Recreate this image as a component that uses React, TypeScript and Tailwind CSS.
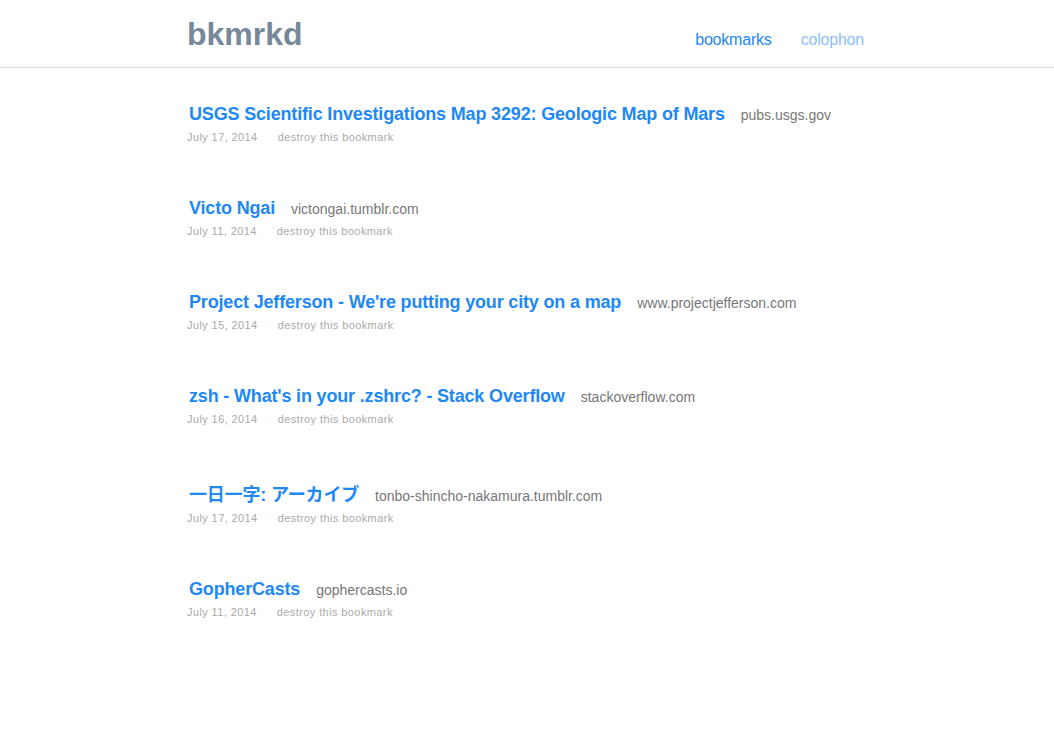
import React from "react";

const bookmarks = [
  {
    title: "USGS Scientific Investigations Map 3292: Geologic Map of Mars",
    site: "pubs.usgs.gov",
    date: "July 17, 2014",
  },
  { title: "Victo Ngai", site: "victongai.tumblr.com", date: "July 11, 2014" },
  {
    title: "Project Jefferson - We're putting your city on a map",
    site: "www.projectjefferson.com",
    date: "July 15, 2014",
  },
  {
    title: "zsh - What's in your .zshrc? - Stack Overflow",
    site: "stackoverflow.com",
    date: "July 16, 2014",
  },
  {
    title: "一日一字: アーカイブ",
    site: "tonbo-shincho-nakamura.tumblr.com",
    date: "July 17, 2014",
  },
  { title: "GopherCasts", site: "gophercasts.io", date: "July 11, 2014" },
];

const App = () => {
  return (
    <div className="min-h-screen bg-white font-['Liberation_Sans','Noto_Sans_CJK_JP',sans-serif]">
      <header className="h-[68px] border-b border-[#dddddd]">
        <div className="w-[680px] mx-auto flex items-baseline justify-between pt-[16px]">
          <h1 className="text-[32px] leading-[normal] font-bold text-[#778899]">bkmrkd</h1>
          <nav className="flex items-baseline gap-[29px] text-[16px] leading-[normal] tracking-[-0.2px] pr-[3px]">
            <a className="text-[#1e88f5]">bookmarks</a>
            <a className="text-[#8cc0fa]">colophon</a>
          </nav>
        </div>
      </header>
      <main className="w-[680px] mx-auto pt-[36px] flex flex-col gap-[55px]">
        {bookmarks.map((b) => (
          <div key={b.title + b.date}>
            <div className="ml-[2px] leading-[normal]">
              <a className="text-[18px] font-bold tracking-[-0.17px] text-[#1e88f5]">{b.title}</a>
              <span className="ml-[16px] text-[14px] text-[#777777]">{b.site}</span>
            </div>
            <div className="mt-[6px] text-[11px] leading-[normal] tracking-[0.4px] text-[#aaaaaa] flex gap-[20px]">
              <span>{b.date}</span>
              <a>destroy this bookmark</a>
            </div>
          </div>
        ))}
      </main>
    </div>
  );
};

export default App;
